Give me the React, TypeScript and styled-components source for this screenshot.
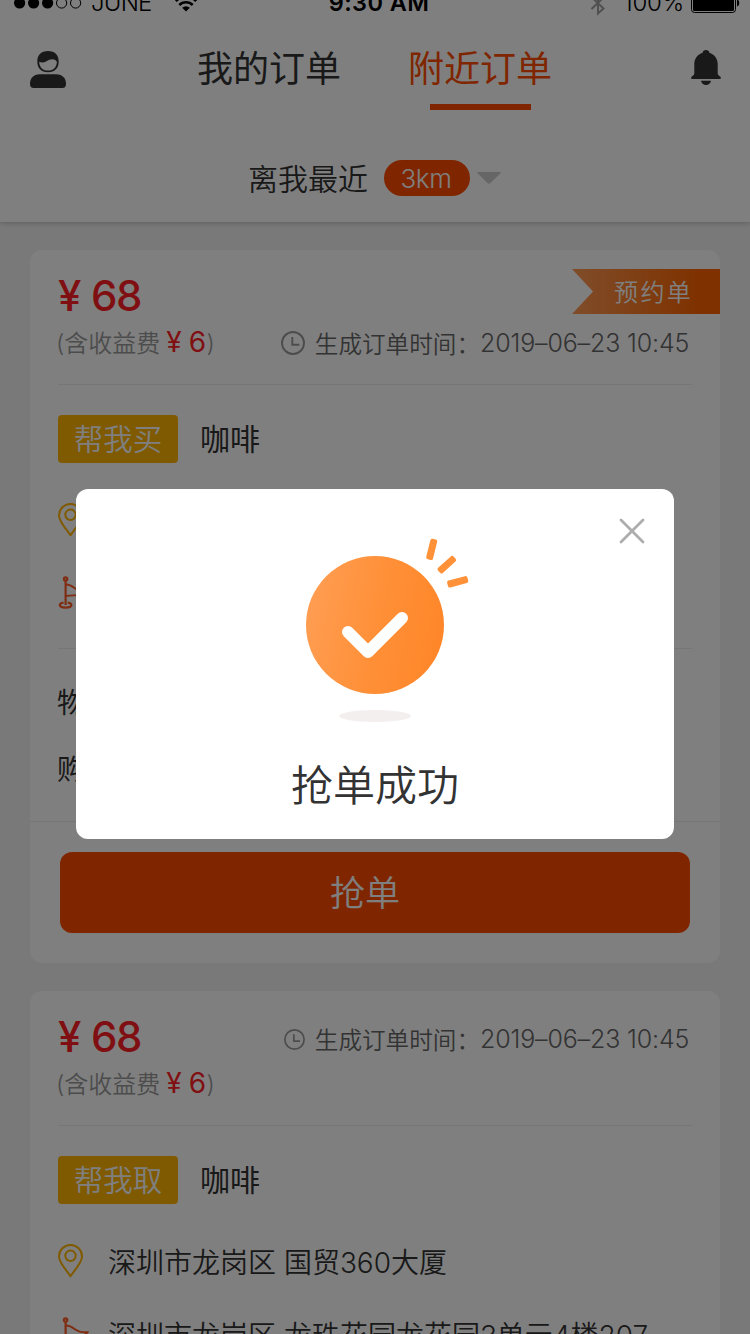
import React from 'react';
import styled, { createGlobalStyle } from 'styled-components';

const GlobalStyle = createGlobalStyle`
  * { box-sizing: border-box; }
  body {
    margin: 0;
    background: #f2f2f2;
    font-family: Inter, 'Noto Sans CJK SC', sans-serif;
    font-weight: 350;
    color: #333;
  }
`;

const Screen = styled.div`
  position: relative;
  width: 750px;
  height: 1334px;
  overflow: hidden;
  background: #f2f2f2;
`;

const Header = styled.header`
  height: 222px;
  background: #fff;
  box-shadow: 0 1px 5px rgba(0, 0, 0, 0.22);
  overflow: hidden;
`;

const StatusBar = styled.div`
  display: grid;
  grid-template-columns: 1fr auto 1fr;
  height: 40px;
  margin-top: -16px;
  padding: 0 10px 0 14px;
  color: #000;
  font-size: 24px;
  line-height: 38px;
`;

const StatusGroup = styled.div<{ $end?: boolean }>`
  display: flex;
  align-items: center;
  justify-content: ${(p) => (p.$end ? 'flex-end' : 'flex-start')};
  font-weight: 350;
  height: 38px;
`;

const Carrier = styled.span`
  margin: 0 23px 0 9px;
  letter-spacing: -0.8px;
`;

const Clock = styled.span`
  font-weight: 600;
  font-size: 23.5px;
  letter-spacing: 0.4px;
  margin-left: 4px;
`;

const Percent = styled.span`
  margin: 0 7px 0 17px;
  letter-spacing: -0.2px;
`;

const NavBar = styled.div`
  display: flex;
  align-items: flex-start;
  justify-content: space-between;
  height: 110px;
  padding: 20px 29px 0 29px;
`;

const Tabs = styled.nav`
  display: flex;
  gap: 67px;
  margin-right: 9px;
`;

const Tab = styled.div<{ $active?: boolean }>`
  display: flex;
  flex-direction: column;
  align-items: center;
  width: 144px;
  font-size: 36px;
  line-height: 50px;
  font-weight: 400;
  color: ${(p) => (p.$active ? '#ff4d00' : '#333')};
  &::after {
    content: '';
    width: 101px;
    height: 6px;
    margin-top: 10px;
    background: ${(p) => (p.$active ? '#ff4d00' : 'transparent')};
  }
`;

const NavIcon = styled.svg`
  display: block;
  margin-top: 7px;
`;

const BellDrawing = styled(NavIcon)`
  margin-top: 6px;
`;

const FilterBar = styled.div`
  display: flex;
  align-items: center;
  height: 40px;
  margin-top: 24px;
  padding-left: 248px;
  font-size: 30px;
`;

const FilterLabel = styled.span`
  margin-top: -2px;
`;

const Distance = styled.span`
  display: flex;
  align-items: center;
  justify-content: center;
  width: 86px;
  height: 36px;
  margin: 0 7px 0 16px;
  padding-right: 2px;
  border-radius: 18px;
  background: #ff4d00;
  color: #fff;
  font-size: 26px;
  letter-spacing: -0.4px;
`;

const OrderList = styled.main`
  display: flex;
  flex-direction: column;
  gap: 28px;
  padding: 28px 30px 0;
`;

const Card = styled.article`
  position: relative;
  flex: none;
  height: 713px;
  border-radius: 12px;
  background: #fff;
`;

const CardTop = styled.div`
  display: flex;
  justify-content: space-between;
  height: 135px;
  margin: 0 28px;
  border-bottom: 1px solid #ececec;
`;

const PriceBlock = styled.div`
  padding-top: 20px;
  white-space: nowrap;
`;

const Price = styled.div`
  height: 52px;
  line-height: 52px;
  font-size: 42px;
  font-weight: 500;
  color: #ff1e24;
  letter-spacing: -1.5px;
  word-spacing: 1.5px;
`;

const Bonus = styled.div`
  height: 42px;
  line-height: 40px;
  margin-left: -2px;
  font-size: 24px;
  color: #999;
`;

const BonusValue = styled.span`
  margin: 0 1px 0 6px;
  font-size: 28px;
  font-weight: 400;
  letter-spacing: -0.7px;
  word-spacing: 0.5px;
  color: #ff1e24;
`;

const Created = styled.div<{ $low?: boolean }>`
  display: flex;
  align-items: center;
  height: 40px;
  margin-top: ${(p) => (p.$low ? 73 : 28)}px;
  padding-right: 3px;
  font-size: 24px;
  color: #666;
  white-space: nowrap;
`;

const CreatedLabel = styled.span`
  margin: -1px 0 0 10px;
  font-size: 23.6px;
`;

const CreatedTime = styled.span`
  width: 209px;
  font-size: 25px;
  letter-spacing: -0.15px;
`;

const Ribbon = styled.div`
  position: absolute;
  top: 19px;
  right: 0;
  width: 148px;
  height: 45px;
  padding-left: 42px;
  line-height: 47px;
  font-size: 24px;
  letter-spacing: 2.4px;
  color: #fff;
  background: linear-gradient(90deg, #ff9a54, #ff6400 85%);
  clip-path: polygon(0 0, 100% 0, 100% 100%, 0 100%, 21px 50%);
`;

const ServiceRow = styled.div`
  display: flex;
  align-items: center;
  gap: 22px;
  height: 48px;
  margin: 30px 28px 24px;
  font-size: 30px;
  font-weight: 400;
  line-height: 48px;
`;

const ServiceTag = styled.span`
  width: 120px;
  height: 48px;
  border-radius: 4px;
  background: #ffb400;
  color: #fff;
  font-size: 29.5px;
  font-weight: 350;
  line-height: 48px;
  text-align: center;
`;

const PlaceRow = styled.div`
  display: flex;
  align-items: center;
  height: 66px;
  margin: 0 28px 7px;
  font-size: 28px;
  white-space: nowrap;
`;

const PlaceIcon = styled.svg`
  flex: none;
  margin-right: 22px;
`;

const Details = styled.div`
  height: 174px;
  margin-top: 22px;
  border-bottom: 1px solid #ececec;
  &::before {
    content: '';
    display: block;
    margin: 0 28px;
    height: 1px;
    background: #ececec;
  }
`;

const DetailRow = styled.div`
  height: 67px;
  padding-left: 27px;
  line-height: 67px;
  font-size: 28px;
  font-weight: 400;
  &:first-child {
    margin-top: 21px;
  }
`;

const GrabButton = styled.button`
  display: block;
  width: 630px;
  height: 81px;
  margin: 30px auto 0;
  padding: 2px 20px 0 0;
  border: 0;
  border-radius: 12px;
  background: #ff4d00;
  color: #fff;
  font: inherit;
  font-size: 35px;
  line-height: 79px;
`;

const Mask = styled.div`
  position: absolute;
  inset: 0;
  display: flex;
  align-items: center;
  justify-content: center;
  padding-bottom: 6px;
  background: rgba(0, 0, 0, 0.5);
`;

const Dialog = styled.div`
  position: relative;
  display: flex;
  flex-direction: column;
  align-items: center;
  width: 598px;
  height: 350px;
  padding-top: 45px;
  border-radius: 12px;
  background: #fff;
`;

const CloseButton = styled.svg`
  position: absolute;
  top: 29px;
  right: 29px;
`;

const DialogTitle = styled.h2`
  margin: 28px 0 0;
  font-size: 42px;
  line-height: 60px;
  font-weight: 350;
`;

const SignalDots = () => (
  <svg width="68" height="12" viewBox="0 0 68 12">
    {[0, 1, 2, 3, 4].map((i) => (
      <circle
        key={i}
        cx={5.6 + i * 14}
        cy="6"
        r={i < 3 ? 5.6 : 5.1}
        fill={i < 3 ? '#000' : 'none'}
        stroke={i < 3 ? 'none' : '#000'}
      />
    ))}
  </svg>
);

const Wifi = () => (
  <svg width="22" height="18" viewBox="0 0 22 18">
    <path d="M11 17.500 7.200 13.700a5.400 5.400 0 0 1 7.600 0z" />
    <path d="M4.300 11a9.500 9.500 0 0 1 13.400 0M.8 7a14.500 14.500 0 0 1 20.400 0" fill="none" stroke="#000" strokeWidth="2.600" />
  </svg>
);

const Bluetooth = () => (
  <svg width="16" height="26" viewBox="0 0 16 26" fill="none" stroke="#a0a0a0" strokeWidth="2">
    <path d="m1.500 7 12 11.500L8 23.500v-21l5.500 5L1.500 19" />
  </svg>
);

const Battery = () => (
  <svg width="49" height="20" viewBox="0 0 49 20">
    <rect x="0.5" y="0.5" width="44" height="19" rx="3" fill="none" stroke="#000" />
    <rect x="2" y="2" width="41" height="16" rx="1.5" />
    <path d="M46 6.5c3 .6 3 6.400 0 7z" />
  </svg>
);

const UserIcon = () => (
  <NavIcon width="38" height="38" viewBox="0 0 38 38" fill="#333">
    <path d="M11 23.200h16c7 0 10 4.500 10 9.800 0 2.500-1.200 4-3.500 4h-29C2.200 37 1 35.500 1 33c0-5.300 3-9.800 10-9.800z" />
    <path
      fillRule="evenodd"
      d="M19 0c6.700 0 10.700 4 10.700 10.500S26 21.300 19 21.300 8.300 17 8.300 10.500 12.300 0 19 0zM10.200 10.800c.3 5.600 3.200 8.800 8.800 8.800s8.600-3.200 8.900-8.800C25 6.800 20.800 8.300 17.500 10.300c-2.300 1.400-5 1.700-7.300.5z"
    />
  </NavIcon>
);

const BellIcon = () => (
  <BellDrawing width="30" height="36" viewBox="0 0 30 36" fill="#333">
    <path d="M15 0c1.800 0 3.200 1.100 3.400 2.700 5 1.500 8.300 6 8.300 11.300v9.500c0 1.300 1.500 2.300 2.700 3.200.900.800.4 2.300-.9 2.300h-27c-1.300 0-1.800-1.500-.9-2.300 1.200-.9 2.700-1.900 2.700-3.200V14c0-5.300 3.300-9.800 8.300-11.300C11.800 1.100 13.200 0 15 0z" />
    <path d="M10 30.700h10c-.5 2.500-2.200 4.300-5 4.300s-4.500-1.800-5-4.300z" />
  </BellDrawing>
);

const TimeIcon = ({ size }: { size: number }) => (
  <svg width={size} height={size} viewBox="0 0 24 24" fill="none" stroke="#999" strokeWidth="1.9">
    <circle cx="12" cy="12" r="11" />
    <path d="M11.300 6v7.800h7" />
  </svg>
);

const PinIcon = () => (
  <PlaceIcon width="28" height="34" viewBox="0 0 28 34" fill="none" stroke="#ffb400" strokeWidth="2">
    <path d="M12.500 32.200C8 25.500 1 18.500 1 12.400a11.500 11.500 0 0 1 23 0c0 6.100-7 13.100-11.500 19.800z" strokeLinejoin="round" />
    <circle cx="12.500" cy="11.800" r="5.200" />
  </PlaceIcon>
);

const FlagIcon = () => (
  <PlaceIcon width="28" height="34" viewBox="0 0 28 34" overflow="visible" fill="none" stroke="#ff5a26" strokeWidth="2.200">
    <circle cx="7.600" cy="3" r="1.700" />
    <path d="M7.600 5v24" />
    <path d="M7.600 8.500c4.500-.3 7 2 9.700 4 3.500 2.500 7 3 12.200 2.700-3 4.800-10 3.500-21.900 4.800" strokeWidth="1.900" />
    <path d="M5.500 26.700c-2.300.3-3.700 1.200-3.700 2.400 0 1.500 2.500 2.500 5.800 2.500s5.800-1 5.800-2.500c0-1.200-1.400-2.100-3.700-2.400" />
  </PlaceIcon>
);

const SuccessMark = () => (
  <svg width="180" height="194" viewBox="285 534 180 194" overflow="visible">
    <defs>
      <linearGradient id="disc" x1="0" y1="0.4" x2="1" y2="0.6">
        <stop offset="0" stopColor="#ff9d52" />
        <stop offset="0.55" stopColor="#ff8f36" />
        <stop offset="1" stopColor="#ff8629" />
      </linearGradient>
    </defs>
    <circle cx="375" cy="625" r="69" fill="url(#disc)" />
    <path d="M348 632 368 652 402 618" fill="none" stroke="#fff" strokeWidth="12" strokeLinecap="round" strokeLinejoin="round" />
    <g fill="#ff9138">
      <rect x="-3.500" y="-10.500" width="7" height="21" rx="2" transform="translate(431.700 549.400) rotate(14)" />
      <rect x="-3.500" y="-10.500" width="7" height="21" rx="2" transform="translate(446.800 564.700) rotate(48)" />
      <rect x="-3.500" y="-10.500" width="7" height="21" rx="2" transform="translate(457.700 581.800) rotate(75)" />
    </g>
    <ellipse cx="375" cy="716" rx="36" ry="6" fill="#f3efee" />
  </svg>
);

interface Order {
  service: string;
  reserved?: boolean;
}

const orders: Order[] = [{ service: '帮我买', reserved: true }, { service: '帮我取' }];

const OrderCard = ({ service, reserved }: Order) => (
  <Card>
    {reserved && <Ribbon>预约单</Ribbon>}
    <CardTop>
      <PriceBlock>
        <Price>¥ 68</Price>
        <Bonus>
          (含收益费<BonusValue>¥ 6</BonusValue>)
        </Bonus>
      </PriceBlock>
      <Created $low={reserved}>
        <TimeIcon size={reserved ? 24 : 21} />
        <CreatedLabel>生成订单时间：</CreatedLabel>
        <CreatedTime>2019–06–23 10:45</CreatedTime>
      </Created>
    </CardTop>
    <ServiceRow>
      <ServiceTag>{service}</ServiceTag>
      <span>咖啡</span>
    </ServiceRow>
    <PlaceRow>
      <PinIcon />
      深圳市龙岗区 国贸360大厦
    </PlaceRow>
    <PlaceRow>
      <FlagIcon />
      深圳市龙岗区 龙珠花园龙花园3单元4楼207
    </PlaceRow>
    <Details>
      <DetailRow>物品</DetailRow>
      <DetailRow>购买</DetailRow>
    </Details>
    <GrabButton>抢单</GrabButton>
  </Card>
);

export default function App() {
  return (
    <Screen>
      <GlobalStyle />
      <Header>
        <StatusBar>
          <StatusGroup>
            <SignalDots />
            <Carrier>JUNE</Carrier>
            <Wifi />
          </StatusGroup>
          <Clock>9:30 AM</Clock>
          <StatusGroup $end>
            <Bluetooth />
            <Percent>100%</Percent>
            <Battery />
          </StatusGroup>
        </StatusBar>
        <NavBar>
          <UserIcon />
          <Tabs>
            <Tab>我的订单</Tab>
            <Tab $active>附近订单</Tab>
          </Tabs>
          <BellIcon />
        </NavBar>
        <FilterBar>
          <FilterLabel>离我最近</FilterLabel>
          <Distance>3km</Distance>
          <svg width="24" height="12" viewBox="0 0 24 12" fill="#ccc">
            <path d="M1 0h22c1 0 1 .8.500 1.300L13.500 11c-1 1-2 1-3 0L.5 1.300C0 .8 0 0 1 0z" />
          </svg>
        </FilterBar>
      </Header>
      <OrderList>
        {orders.map((order) => (
          <OrderCard key={order.service} {...order} />
        ))}
      </OrderList>
      <Mask>
        <Dialog>
          <CloseButton width="26" height="26" viewBox="0 0 26 26" stroke="#adadad" strokeWidth="2.800" strokeLinecap="round">
            <path d="m2 2 22 22M24 2 2 24" />
          </CloseButton>
          <SuccessMark />
          <DialogTitle>抢单成功</DialogTitle>
        </Dialog>
      </Mask>
    </Screen>
  );
}
